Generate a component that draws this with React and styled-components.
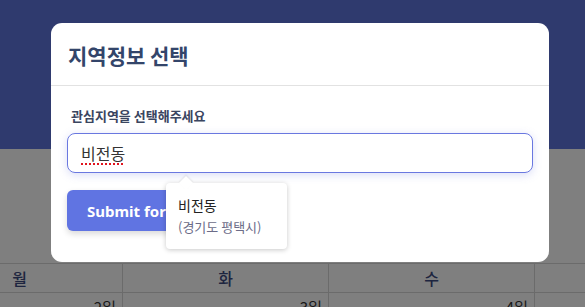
import React from "react";
import styled, { createGlobalStyle } from "styled-components";

const Global = createGlobalStyle`
  html, body { margin: 0; padding: 0; overflow: hidden; }
  body { font-family: "Noto Sans CJK KR", "Noto Sans", sans-serif; background: #fff; }
`;

const Page = styled.div`
  width: 585px;
  height: 307px;
  display: flex;
  flex-direction: column;
  overflow: hidden;
`;

const TopBar = styled.div`
  height: 149px;
  background: #5e74dc;
  flex-shrink: 0;
`;

const Spacer = styled.div`
  height: 114px;
  flex-shrink: 0;
`;

const Table = styled.div`
  margin-left: -83px;
  display: grid;
  grid-template-columns: repeat(4, 206px);
  border-top: 1px solid #d6d6d6;
`;

const HeadCell = styled.div`
  height: 28px;
  border-right: 1px solid #d6d6d6;
  border-bottom: 1px solid #d6d6d6;
  display: flex;
  align-items: center;
  justify-content: center;
  font-size: 16px;
  font-weight: 500;
  color: #3d4a80;
`;

const DayCell = styled.div`
  height: 40px;
  border-right: 1px solid #d6d6d6;
  padding: 3px 6px 0 0;
  text-align: right;
  font-size: 15px;
  color: #333;
`;

const Overlay = styled.div`
  position: fixed;
  inset: 0;
  background: rgba(0, 0, 0, 0.5);
  padding: 23px 0 0 51px;
  box-sizing: border-box;
`;

const Modal = styled.div`
  width: 498px;
  background: #fff;
  border-radius: 11px;
  display: flex;
  flex-direction: column;
`;

const Header = styled.div`
  height: 62px;
  padding: 0 17px;
  display: flex;
  align-items: center;
  border-bottom: 1px solid #e2e2e2;
`;

const Title = styled.h2`
  margin: 0;
  padding-top: 2px;
  font-size: 21px;
  font-weight: 700;
  color: #33456a;
`;

const Body = styled.div`
  padding: 21px 16px 31px;
  display: flex;
  flex-direction: column;
`;

const Label = styled.label`
  margin-left: 4px;
  font-size: 13px;
  line-height: 18px;
  font-weight: 600;
  color: #3a4560;
  margin-bottom: 8px;
`;

const Field = styled.div`
  position: relative;
  height: 40px;
  border: 1px solid #6a78e0;
  border-radius: 8px;
  box-sizing: border-box;
  box-shadow: 0 2px 8px rgba(106, 120, 224, 0.25);
  display: flex;
  align-items: center;
  padding: 0 13px;
`;

const Value = styled.span`
  font-size: 16px;
  color: #333;
  text-decoration: underline dotted #e0141e;
  text-decoration-thickness: 2px;
  text-underline-offset: 3px;
`;

const Button = styled.button`
  margin-top: 17px;
  align-self: flex-start;
  height: 41px;
  padding: 0 20px;
  border: none;
  border-radius: 6px;
  background: #6074e2;
  color: #fff;
  font-family: "Noto Sans", "Open Sans", sans-serif;
  font-size: 15px;
  font-weight: 700;
  box-shadow: 0 3px 6px rgba(0, 0, 0, 0.15);
`;

const Suggest = styled.div`
  position: absolute;
  left: 98px;
  top: 49px;
  width: 121px;
  height: 66px;
  box-sizing: border-box;
  background: #fff;
  border-radius: 4px;
  box-shadow: 0 1px 5px rgba(0, 0, 0, 0.22);
  padding: 13px 0 0 12px;
  z-index: 2;
  &::before {
    content: "";
    position: absolute;
    left: 15px;
    top: -5px;
    width: 10px;
    height: 10px;
    background: #fff;
    transform: rotate(45deg);
    box-shadow: -1px -1px 2px rgba(0, 0, 0, 0.08);
  }
`;

const SuggestName = styled.div`
  position: relative;
  font-size: 14px;
  line-height: 18px;
  font-weight: 400;
  color: #222;
`;

const SuggestSub = styled.div`
  position: relative;
  margin-top: 5px;
  font-size: 13px;
  line-height: 16px;
  font-weight: 400;
  color: #6c6c88;
`;

export default function App() {
  return (
    <>
      <Global />
      <Page>
        <TopBar />
        <Spacer />
        <Table>
          <HeadCell>월</HeadCell>
          <HeadCell>화</HeadCell>
          <HeadCell>수</HeadCell>
          <HeadCell />
          <DayCell>2일</DayCell>
          <DayCell>3일</DayCell>
          <DayCell>4일</DayCell>
          <DayCell />
        </Table>
      </Page>
      <Overlay>
        <Modal>
          <Header>
            <Title>지역정보 선택</Title>
          </Header>
          <Body>
            <Label>관심지역을 선택해주세요</Label>
            <Field>
              <Value>비전동</Value>
              <Suggest>
                <SuggestName>비전동</SuggestName>
                <SuggestSub>(경기도 평택시)</SuggestSub>
              </Suggest>
            </Field>
            <Button>Submit form</Button>
          </Body>
        </Modal>
      </Overlay>
    </>
  );
}
